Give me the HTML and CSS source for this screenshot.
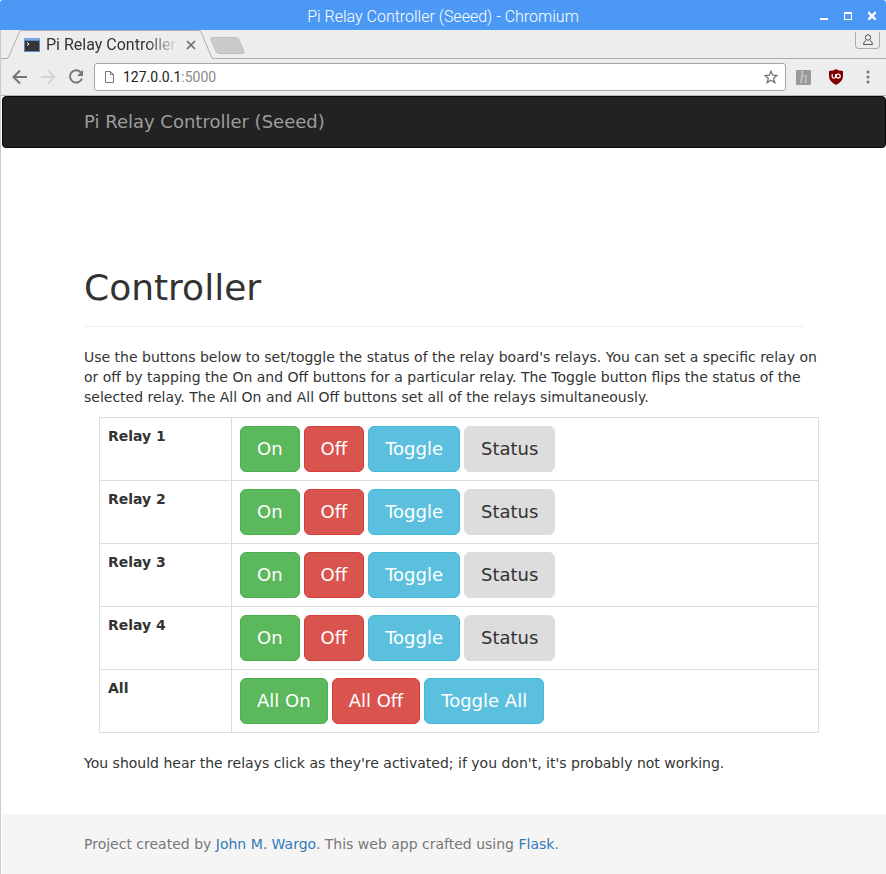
FILE: index.html
```html
<!DOCTYPE html>
<html lang="en">
<head>
<meta charset="utf-8">
<title>Pi Relay Controller (Seeed)</title>
<link rel="stylesheet" href="styles.css">
</head>
<body>
<div class="window">
  <header class="titlebar">
    <span class="title">Pi Relay Controller (Seeed) - Chromium</span>
    <div class="window-controls">
      <button type="button" aria-label="Minimize"><svg width="8" height="10" viewBox="0 0 8 10"><path d="M0 8h8v2H0z" fill="#fff"/></svg></button>
      <button type="button" aria-label="Maximize"><svg width="8" height="10" viewBox="0 0 8 10"><path d="M0 2h8v8H0zM1 4v5h6V4z" fill="#fff" fill-rule="evenodd"/></svg></button>
      <button type="button" aria-label="Close"><svg width="8" height="10" viewBox="0 0 8 10"><path d="M1 3l6 6M7 3L1 9" stroke="#fff" stroke-width="2.4" stroke-linecap="square"/></svg></button>
    </div>
  </header>

  <div class="frame">
    <div class="tabstrip">
      <div class="tab">
        <svg class="tab-shape" width="206" height="29" viewBox="0 0 206 29"><path d="M0 28.5L1 27 14 1.5H193L206 28.5V29H0z" fill="#ededed"/><path d="M0 28.500Q1 28.500 1.500 27L12.500 2Q13 .5 14.500 .5H192Q193.500 .5 194 2L204.500 27Q205 28.500 206 28.500" fill="none" stroke="#adadad"/></svg>
        <div class="tab-content">
          <svg width="16" height="16" viewBox="0 0 16 16"><path d="M0 1h16v14H0z" fill="#5d86c4"/><path d="M0 1h16v2H0z" fill="#7ba5e2"/><path d="M1 4h14v10H1z" fill="#343434"/><path d="M3 5.500l2 1.500-2 1.500" stroke="#fff" fill="none"/></svg>
          <span class="tab-title">Pi Relay Controller</span>
          <button type="button" aria-label="Close tab"><svg width="10" height="10" viewBox="0 0 10 10"><path d="M1 1l8 8M9 1L1 9" stroke="#6b6e6b" stroke-width="1.700"/></svg></button>
        </div>
      </div>
      <button type="button" class="new-tab" aria-label="New tab"><svg width="36" height="18" viewBox="0 0 36 18"><path d="M2 .5H26Q28 .5 29 2.500L34 15Q34.500 16.500 33 16.500H9Q7 16.500 6 14.500L1 2.500Q.5 .5 2 .5z" fill="#cacaca" stroke="#bdbdbd"/></svg></button>
      <button type="button" class="profile" aria-label="Profile"><svg width="12" height="12" viewBox="0 0 12 12" fill="none" stroke="#555"><circle cx="6" cy="3.500" r="2.700"/><path d="M4 6.500Q1.500 7.500 1.500 10.500H10.500Q10.500 7.500 8 6.500"/></svg></button>
    </div>

    <div class="toolbar">
      <button type="button" aria-label="Back"><svg width="16" height="16" viewBox="0 0 16 16"><path d="M15 8H2M8 1.500L1.500 8 8 14.500" fill="none" stroke="#747774" stroke-width="2"/></svg></button>
      <button type="button" aria-label="Forward" disabled><svg width="16" height="16" viewBox="0 0 16 16"><path d="M1 8H14M8 1.500L14.500 8 8 14.500" fill="none" stroke="#d2d3d2" stroke-width="2"/></svg></button>
      <button type="button" aria-label="Reload"><svg width="16" height="16" viewBox="0 0 16 16"><path d="M13 3.500A6.200 6.200 0 1 0 14 9.500" fill="none" stroke="#747774" stroke-width="2"/><path d="M15 1v6H9z" fill="#747774"/></svg></button>
      <div class="omnibox">
        <svg width="10" height="12" viewBox="0 0 10 12"><path d="M.5 .5H5.500L8.500 3.500V11.500H.5zM5.500 .5V3.500H8.500" fill="none" stroke="#777"/></svg>
        <div class="address" contenteditable="true" role="textbox" aria-label="Address">127.0.0.1<span class="port">:5000</span></div>
        <button type="button" aria-label="Bookmark"><svg width="14" height="14" viewBox="0 0 14 14"><path d="M7 1.200L8.700 5.200 13 5.500 9.700 8.300 10.800 12.600 7 10.300 3.200 12.600 4.300 8.300 1 5.500 5.300 5.200z" fill="none" stroke="#707370" stroke-width="1.300"/></svg></button>
      </div>
      <div class="extensions">
        <button type="button" class="ext-h" aria-label="Extension">h</button>
        <button type="button" aria-label="uBlock Origin"><svg width="14" height="16" viewBox="0 0 14 16"><path d="M7 0Q9.500 1.800 14 2V7Q14 12.500 7 16 0 12.500 0 7V2Q4.500 1.800 7 0z" fill="#800000"/><path d="M3.200 5V7.700Q3.200 9.200 4.800 9.200T6.600 7.700V5" fill="none" stroke="#fff" stroke-width="1.200"/><circle cx="9.200" cy="7.100" r="2" fill="none" stroke="#fff" stroke-width="1.200"/></svg></button>
        <button type="button" class="menu" aria-label="Menu"><svg width="4" height="14" viewBox="0 0 4 14" fill="#747774"><circle cx="2" cy="2" r="1.500"/><circle cx="2" cy="7" r="1.500"/><circle cx="2" cy="12" r="1.500"/></svg></button>
      </div>
    </div>

    <div class="page">
      <nav class="navbar"><div class="container"><a href="#" class="brand">Pi Relay Controller (Seeed)</a></div></nav>
      <main class="container content">
        <h1>Controller</h1>
        <p class="intro">Use the buttons below to set/toggle the status of the relay board's relays. You can set a specific relay on<br>or off by tapping the On and Off buttons for a particular relay. The Toggle button flips the status of the<br>selected relay. The All On and All Off buttons set all of the relays simultaneously.</p>
        <table>
          <tbody>
            <tr><th scope="row">Relay 1</th><td><div class="buttons"><button type="button" class="btn on">On</button><button type="button" class="btn off">Off</button><button type="button" class="btn toggle">Toggle</button><button type="button" class="btn status">Status</button></div></td></tr>
            <tr><th scope="row">Relay 2</th><td><div class="buttons"><button type="button" class="btn on">On</button><button type="button" class="btn off">Off</button><button type="button" class="btn toggle">Toggle</button><button type="button" class="btn status">Status</button></div></td></tr>
            <tr><th scope="row">Relay 3</th><td><div class="buttons"><button type="button" class="btn on">On</button><button type="button" class="btn off">Off</button><button type="button" class="btn toggle">Toggle</button><button type="button" class="btn status">Status</button></div></td></tr>
            <tr><th scope="row">Relay 4</th><td><div class="buttons"><button type="button" class="btn on">On</button><button type="button" class="btn off">Off</button><button type="button" class="btn toggle">Toggle</button><button type="button" class="btn status">Status</button></div></td></tr>
            <tr><th scope="row">All</th><td><div class="buttons"><button type="button" class="btn on">All On</button><button type="button" class="btn off">All Off</button><button type="button" class="btn toggle">Toggle All</button></div></td></tr>
          </tbody>
        </table>
        <p>You should hear the relays click as they're activated; if you don't, it's probably not working.</p>
      </main>
      <footer class="footer"><div class="container"><p>Project created by <a href="#">John M. Wargo</a>. This web app crafted using <a href="#">Flask</a>.</p></div></footer>
    </div>
  </div>
</div>
</body>
</html>
```
FILE: styles.css
```css
* { box-sizing: border-box; }
body { margin: 0; background: #fff; }
button { margin: 0; padding: 0; border: 0; background: none; font: inherit; color: inherit; }
svg { display: block; }

.window { min-height: 100vh; display: flex; flex-direction: column; font-family: Roboto, sans-serif; }

.titlebar {
  display: grid;
  grid-template-columns: 1fr auto 1fr;
  align-items: center;
  height: 30px;
  padding: 0 10px;
  background: #4c98f5;
  color: #fff;
  border-radius: 3px 3px 0 0;
}
.title { grid-column: 2; font-size: 16px; font-weight: 300; line-height: 20px; padding-top: 4px; }
.window-controls { display: flex; justify-content: flex-end; gap: 16px; }

.frame {
  flex: 1;
  display: flex;
  flex-direction: column;
  border-left: 1px solid #ccc;
  background: #ededed;
}

.tabstrip {
  display: flex;
  align-items: flex-start;
  height: 29px;
  padding: 0 6px;
  box-shadow: inset 0 -1px #adadad;
}
.tab { display: grid; }
.tab-shape, .tab-content { grid-area: 1 / 1; }
.tab-content { display: flex; align-items: center; padding: 0 17px; }
.tab-title {
  width: 132px;
  margin: 0 8px 0 6px;
  white-space: nowrap;
  font-size: 16px;
  line-height: 20px;
  color: #333;
  mask-image: linear-gradient(to right, #000 100px, transparent);
}
.new-tab { margin: 7px 0 0 -3px; }
.profile {
  display: grid;
  place-items: center;
  width: 25px;
  height: 17px;
  margin: 2px 0 0 auto;
  border: 1px solid #adadad;
  border-top: 0;
  border-radius: 0 0 4px 4px;
}

.toolbar {
  display: flex;
  align-items: center;
  gap: 12px;
  height: 37px;
  padding: 0 11px;
  border-bottom: 1px solid #b4b4b4;
}
.omnibox {
  flex: 1;
  display: flex;
  align-items: center;
  gap: 8px;
  height: 28px;
  padding: 0 7px 0 10px;
  border: 1px solid #a5a5a5;
  border-radius: 3px;
  background: #fff;
}
.omnibox, .toolbar .extensions { margin-left: -2px; }
.address { flex: 1; font-size: 14px; line-height: 18px; color: #222; outline: 0; }
.port { color: #8a8a8a; }
.extensions { display: flex; align-items: center; gap: 18px; }
.ext-h {
  width: 15px;
  height: 15px;
  border-radius: 1px;
  background: #999;
  color: #ccc;
  font: italic 16px/15px "Liberation Serif", serif;
}
.menu { display: grid; place-items: center; width: 14px; }

.page {
  flex: 1;
  display: flex;
  flex-direction: column;
  padding-left: 1px;
  background: #fff;
  color: #333;
  font: 14px/20px "DejaVu Sans", sans-serif;
}
.container { width: 100%; max-width: 750px; margin: 0 auto; padding: 0 15px; }
.navbar { border: 1px solid #080808; border-radius: 4px; background: #222; }
.brand { display: block; padding: 15px 0; font-size: 18px; color: #9d9d9d; text-decoration: none; }
.content { flex: 1; padding-top: 120px; }
h1 {
  margin: 0 0 20px;
  padding-bottom: 18px;
  border-bottom: 1px solid #eee;
  font-size: 36px;
  font-weight: 500;
  line-height: 40px;
}
p { margin: 0 0 10px; }
.intro { margin-right: -48px; }
table { width: 100%; margin: 0 0 20px 15px; border-collapse: collapse; }
th, td { padding: 8px; border: 1px solid #ddd; vertical-align: top; }
th { width: 132px; text-align: left; font-weight: 700; }
.buttons { display: flex; flex-wrap: wrap; gap: 4px; }
.btn {
  padding: 10px 16px;
  border: 1px solid #ddd;
  border-radius: 6px;
  color: #fff;
  font-size: 18px;
  line-height: 24px;
}
.on { background: #5cb85c; border-color: #4cae4c; }
.off { background: #d9534f; border-color: #d43f3a; }
.toggle { background: #5bc0de; border-color: #46b8da; }
.status { background: #ddd; color: #333; }
.footer { padding: 20px 0; background: #f5f5f5; color: #777; }
.footer p { margin: 0; }
.footer a { color: #337ab7; text-decoration: none; }
```
